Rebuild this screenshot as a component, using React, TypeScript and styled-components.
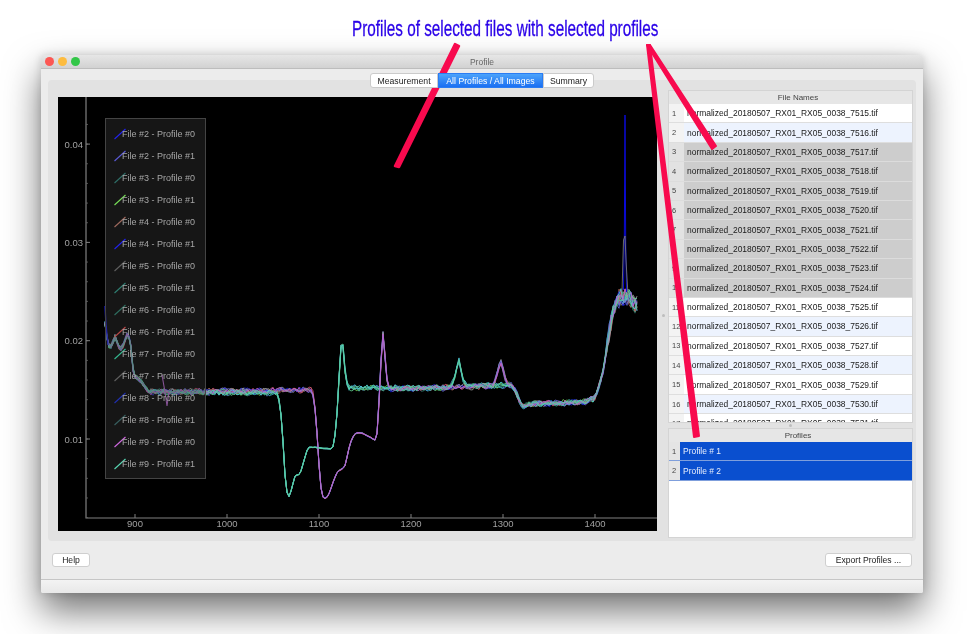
import React from 'react';
import styled, { createGlobalStyle } from 'styled-components';

const GlobalStyle = createGlobalStyle`
  html, body {
    margin: 0;
    padding: 0;
    background: #fff;
    font-family: "Liberation Sans", Arial, sans-serif;
  }
`;

const Page = styled.div`
  position: relative;
  width: 970px;
  height: 634px;
  overflow: hidden;
  background: #fff;
  filter: blur(0.4px);
`;

const Caption = styled.div`
  height: 55px;
  box-sizing: border-box;
  padding: 16px 0 0 352px;
  font-size: 22px;
  line-height: 26px;
  color: #2a00e8;
  white-space: nowrap;
  -webkit-text-stroke: 0.3px #2a00e8;
  transform: scaleX(0.694);
  transform-origin: 352px 0;
`;

const Window = styled.div`
  display: flex;
  flex-direction: column;
  box-sizing: border-box;
  width: 882px;
  height: 538px;
  margin-left: 41px;
  background: #ececec;
  border-radius: 4px 4px 2px 2px;
  box-shadow: 0 18px 36px rgba(0, 0, 0, 0.55), 0 0 8px rgba(0, 0, 0, 0.15);
`;

const TitleBar = styled.div`
  display: grid;
  grid-template-columns: 1fr auto 1fr;
  align-items: center;
  box-sizing: border-box;
  height: 14px;
  flex: none;
  padding: 0 4px;
  background: linear-gradient(#e6e6e6, #d2d2d2);
  border-bottom: 1px solid #bdbdbd;
  border-radius: 4px 4px 0 0;
`;

const Lights = styled.div`
  display: flex;
  gap: 4px;
`;

const Light = styled.span<{ $color: string }>`
  width: 9px;
  height: 9px;
  border-radius: 50%;
  background: ${(p) => p.$color};
`;

const WindowTitle = styled.div`
  font-size: 8.5px;
  color: #666;
`;

const Tabs = styled.div`
  position: relative;
  z-index: 1;
  display: flex;
  justify-content: center;
  flex: none;
  margin-top: 4px;
  height: 15px;
`;

const Tab = styled.div<{ $w: number; $active?: boolean }>`
  width: ${(p) => p.$w}px;
  box-sizing: border-box;
  display: flex;
  align-items: center;
  justify-content: center;
  font-size: 8.7px;
  color: ${(p) => (p.$active ? '#fff' : '#222')};
  background: ${(p) => (p.$active ? 'linear-gradient(#4ba3fb, #1b6ff2)' : '#fff')};
  border: 1px solid ${(p) => (p.$active ? '#2a7cf3' : '#cbcbcb')};
  &:first-child {
    border-radius: 3px 0 0 3px;
  }
  &:last-child {
    border-radius: 0 3px 3px 0;
  }
`;

const Pane = styled.div`
  display: flex;
  flex: none;
  align-items: flex-start;
  box-sizing: border-box;
  width: 868px;
  height: 461px;
  margin: -8px 0 0 7px;
  padding-left: 10px;
  background: #e2e2e2;
  border-radius: 4px;
`;

const Plot = styled.div`
  position: relative;
  flex: none;
  width: 599px;
  height: 434px;
  margin-top: 17px;
  background: #000;
`;

const PlotSvg = styled.svg`
  display: block;
`;

const Legend = styled.div`
  position: absolute;
  left: 47px;
  top: 21px;
  box-sizing: border-box;
  width: 101px;
  height: 361px;
  padding-top: 4px;
  background: rgba(60, 60, 60, 0.36);
  border: 1px solid #444;
`;

const LegendRow = styled.div`
  display: flex;
  align-items: center;
  height: 22px;
  padding-left: 8px;
`;

const LegendSample = styled.svg`
  flex: none;
  margin-right: -4px;
`;

const LegendLabel = styled.span`
  font-size: 9px;
  color: #a6a6a6;
  white-space: nowrap;
`;

const Side = styled.div`
  flex: none;
  display: flex;
  flex-direction: column;
  width: 245px;
  margin: 10px 0 0 11px;
`;

const TableBox = styled.div<{ $h: number }>`
  height: ${(p) => p.$h}px;
  box-sizing: border-box;
  overflow: hidden;
  background: #fff;
  border: 1px solid #d4d4d4;
  border-top: 0;
`;

const Head = styled.div`
  display: flex;
  align-items: center;
  justify-content: center;
  box-sizing: border-box;
  height: 14px;
  padding-left: 15px;
  font-size: 8px;
  color: #444;
  background: #e6e6e6;
  border-top: 1px solid #d4d4d4;
`;

const Row = styled.div<{ $h: number; $bg: string; $gap: string }>`
  display: flex;
  height: ${(p) => p.$h}px;
  box-sizing: border-box;
  background: ${(p) => p.$bg};
  border-bottom: 1.4px solid ${(p) => p.$gap};
`;

const RowNum = styled.div<{ $w: number; $bg: string }>`
  flex: none;
  width: ${(p) => p.$w}px;
  box-sizing: border-box;
  padding-left: 3px;
  display: flex;
  align-items: center;
  font-size: 7.5px;
  color: #444;
  background: ${(p) => p.$bg};
`;

const RowText = styled.div<{ $color?: string; $pad?: number }>`
  padding-left: ${(p) => p.$pad ?? 3}px;
  display: flex;
  align-items: center;
  font-size: 8.45px;
  white-space: nowrap;
  color: ${(p) => p.$color || '#1a1a1a'};
`;

const Splitter = styled.div`
  height: 5px;
  display: flex;
  align-items: center;
  justify-content: center;
`;

const Grip = styled.span`
  width: 3px;
  height: 3px;
  border-radius: 50%;
  background: #bdbdbd;
`;

const VGrip = styled.div`
  position: absolute;
  left: 604px;
  top: 217px;
  width: 3px;
  height: 3px;
  border-radius: 50%;
  background: #bdbdbd;
`;

const Footer = styled.div`
  flex: 1;
  display: flex;
  justify-content: space-between;
  align-items: center;
  padding: 0 11px;
`;

const PushButton = styled.div<{ $w: number }>`
  width: ${(p) => p.$w}px;
  height: 14px;
  display: flex;
  align-items: center;
  justify-content: center;
  font-size: 8.6px;
  color: #222;
  background: #fff;
  border: 1px solid #cfcfcf;
  border-radius: 3px;
  box-sizing: border-box;
`;

const StatusBar = styled.div`
  flex: none;
  height: 14px;
  box-sizing: border-box;
  background: linear-gradient(#f3f3f3, #e8e8e8);
  border-top: 1px solid #c6c6c6;
  border-radius: 0 0 2px 2px;
`;

const Overlay = styled.svg`
  position: absolute;
  left: 0;
  top: 0;
  pointer-events: none;
`;

type Pt = [number, number];

const PRE: Pt[] = [
  [105, 323], [107, 340], [110, 350], [113, 342], [115, 334], [118, 346], [120, 350],
  [124, 345], [127, 333], [131, 342], [133, 375], [140, 380], [147, 390], [152, 392],
];

const TAIL: Pt[] = [
  [512, 385], [516, 392], [522, 407], [530, 404], [585, 402], [595, 398],
  [603, 373], [610, 327], [615, 302], [622, 296], [630, 298], [634, 304], [637, 303],
];

// dip + spikes of the first profile family
const FAM_A: Pt[] = [
  ...PRE, [278, 393], [282, 420], [285, 480], [288, 500], [291, 492], [295, 475], [300, 475],
  [304, 460], [308, 447], [333, 449], [336, 430], [338, 400], [341, 340], [342, 333], [344, 350],
  [345, 377], [348, 388], [450, 388], [455, 378], [459, 355], [462, 378], [466, 386], ...TAIL,
];

// same thing, further right
const FAM_B: Pt[] = [
  ...PRE, [313, 390], [317, 430], [320, 485], [323, 499], [328, 497], [332, 485], [337, 472],
  [345, 467], [350, 443], [355, 433], [362, 433], [377, 441], [380, 383], [383, 319], [386, 377],
  [388, 389], [493, 386], [497, 375], [501, 359], [504, 375], [508, 385], ...TAIL,
];

const interp = (pts: Pt[], x: number) => {
  for (let i = 1; i < pts.length; i++) {
    if (x <= pts[i][0]) {
      const [x0, y0] = pts[i - 1];
      const [x1, y1] = pts[i];
      return y0 + ((y1 - y0) * (x - x0)) / (x1 - x0);
    }
  }
  return pts[pts.length - 1][1];
};

const makeTrace = (pts: Pt[], seed: number) => {
  let s = seed * 7919 + 13;
  const rnd = () => {
    s = (s * 16807) % 2147483647;
    return (s % 1000) / 1000 - 0.5;
  };
  const out: string[] = [];
  for (let x = 105; x <= 637; x += 2) {
    // small average rounds the corners of the dips
    const y = (interp(pts, x - 1.5) + interp(pts, x) * 2 + interp(pts, x + 1.5)) / 4;
    let amp = 5;
    if (y > 412) amp = 1;
    if (x > 606) amp = 14;
    if (x < 150) amp = 4;
    const n = rnd() * amp + Math.sin(x / 3.1 + seed) * amp * 0.2;
    out.push(`${x},${(y + n).toFixed(1)}`);
  }
  return out.join(' ');
};

const TRACES = [
  { c: '#2030e0', f: FAM_B }, { c: '#6a6ae0', f: FAM_A }, { c: '#2f6f68', f: FAM_A },
  { c: '#70c850', f: FAM_A }, { c: '#b06a5a', f: FAM_B }, { c: '#1818d8', f: FAM_B },
  { c: '#909090', f: FAM_B }, { c: '#38b0c8', f: FAM_A }, { c: '#2f8f7a', f: FAM_A },
  { c: '#d05070', f: FAM_B }, { c: '#50d8f0', f: FAM_A }, { c: '#a0a0a0', f: FAM_B },
  { c: '#7070e0', f: FAM_B }, { c: '#60d090', f: FAM_A }, { c: '#c060d0', f: FAM_B },
  { c: '#58c8a8', f: FAM_A },
].map((t, i) => ({ c: t.c, points: makeTrace(t.f, i + 2) }));

const LEGEND: [string, string][] = [
  ['File #2 - Profile #0', '#2222f0'], ['File #2 - Profile #1', '#5a5ad8'],
  ['File #3 - Profile #0', '#2f6f68'], ['File #3 - Profile #1', '#78e058'],
  ['File #4 - Profile #0', '#a06a5e'], ['File #4 - Profile #1', '#2222f0'],
  ['File #5 - Profile #0', '#606060'], ['File #5 - Profile #1', '#2f7f72'],
  ['File #6 - Profile #0', '#2f6f60'], ['File #6 - Profile #1', '#b84848'],
  ['File #7 - Profile #0', '#34b890'], ['File #7 - Profile #1', '#606060'],
  ['File #8 - Profile #0', '#2030b0'], ['File #8 - Profile #1', '#386060'],
  ['File #9 - Profile #0', '#d068e0'], ['File #9 - Profile #1', '#58d8b4'],
];

const XT = [900, 1000, 1100, 1200, 1300, 1400];
const YT = [0.04, 0.03, 0.02, 0.01];
const xPos = (v: number) => 135 + ((v - 900) * 92) / 100;
const yPos = (v: number) => 439 - ((v - 0.01) * 98.3) / 0.01;

const Chart = () => {
  const minorY: number[] = [];
  for (let v = 0.002; v <= 0.044; v += 0.002) minorY.push(v);
  return (
    <PlotSvg width={599} height={434} viewBox="58 97 599 434">
      {TRACES.map((t, i) => (
        <polyline key={i} points={t.points} fill="none" stroke={t.c} strokeWidth={0.8} />
      ))}
      <polyline points="105,306 106,325 108,345" fill="none" stroke="#1818d8" strokeWidth={1.4} />
      <polyline points="162,375 165,392 167,406 169,392" fill="none" stroke="#b060c8" strokeWidth={1.1} />
      <polyline points="623.5,290 624.3,240 625,115 625.7,240 626.5,292" fill="none" stroke="#0a0ad8" strokeWidth={1} />
      <polyline points="622,292 623.5,240 625,236 626,260 628,295" fill="none" stroke="#777" strokeWidth={0.9} />
      <path d="M86 97V518H657" fill="none" stroke="#808080" strokeWidth={1.2} />
      {minorY.map((v) => (
        <line key={v} x1={86} x2={88} y1={yPos(v)} y2={yPos(v)} stroke="#666" strokeWidth={0.8} />
      ))}
      {XT.map((v) => (
        <g key={v}>
          <line x1={xPos(v)} x2={xPos(v)} y1={518} y2={514} stroke="#808080" />
          <text x={xPos(v)} y={527} fontSize={9.5} fill="#a0a0a0" textAnchor="middle">
            {v}
          </text>
        </g>
      ))}
      {YT.map((v) => (
        <g key={v}>
          <line x1={86} x2={90} y1={yPos(v)} y2={yPos(v)} stroke="#808080" />
          <text x={83} y={yPos(v) + 3.5} fontSize={9.5} fill="#a0a0a0" textAnchor="end">
            {v.toFixed(2)}
          </text>
        </g>
      ))}
    </PlotSvg>
  );
};

const files = Array.from({ length: 17 }, (_, i) => ({
  n: i + 1,
  name: `normalized_20180507_RX01_RX05_0038_${7515 + i}.tif`,
  selected: i >= 2 && i <= 9,
}));

export default function App() {
  return (
    <>
      <GlobalStyle />
      <Page>
        <Caption>Profiles of selected files with selected profiles</Caption>
        <Window>
          <TitleBar>
            <Lights>
              <Light $color="#fc5753" />
              <Light $color="#fdbc40" />
              <Light $color="#33c748" />
            </Lights>
            <WindowTitle>Profile</WindowTitle>
            <span />
          </TitleBar>
          <Tabs>
            <Tab $w={68}>Measurement</Tab>
            <Tab $w={105} $active>
              All Profiles / All Images
            </Tab>
            <Tab $w={51}>Summary</Tab>
          </Tabs>
          <Pane>
            <Plot>
              <Chart />
              <Legend>
                {LEGEND.map(([label, color]) => (
                  <LegendRow key={label}>
                    <LegendSample width={12} height={12} viewBox="0 0 12 12">
                      <line x1={0.5} y1={11} x2={11.5} y2={1} stroke={color} strokeWidth={1.1} />
                    </LegendSample>
                    <LegendLabel>{label}</LegendLabel>
                  </LegendRow>
                ))}
              </Legend>
              <VGrip />
            </Plot>
            <Side>
              <TableBox $h={333}>
                <Head>File Names</Head>
                {files.map((f) => (
                  <Row
                    key={f.n}
                    $h={19.4}
                    $bg={f.selected ? '#cdcdcd' : f.n % 2 === 0 ? '#edf3fe' : '#fff'}
                    $gap={f.selected ? '#dcdcdc' : '#dedede'}
                  >
                    <RowNum $w={15} $bg={f.selected ? '#e2e2e2' : '#f3f3f3'}>
                      {f.n}
                    </RowNum>
                    <RowText>{f.name}</RowText>
                  </Row>
                ))}
              </TableBox>
              <Splitter>
                <Grip />
              </Splitter>
              <TableBox $h={110}>
                <Head>Profiles</Head>
                {[1, 2].map((n) => (
                  <Row key={n} $h={19.4} $bg="#0a4fcf" $gap="#7f9fdc">
                    <RowNum $w={11} $bg="#e4e4e4">
                      {n}
                    </RowNum>
                    <RowText $color="#e8eefc" $pad={3}>
                      Profile # {n}
                    </RowText>
                  </Row>
                ))}
              </TableBox>
            </Side>
          </Pane>
          <Footer>
            <PushButton $w={38}>Help</PushButton>
            <PushButton $w={87}>Export Profiles ...</PushButton>
          </Footer>
          <StatusBar />
        </Window>
        <Overlay width={970} height={634} viewBox="0 0 970 634">
          <g fill="#f80a4e" stroke="#f80a4e" strokeLinejoin="round" strokeLinecap="round">
            <polygon points="455,44 459,46 399,167 395,166" strokeWidth={2.5} />
            <polygon points="647,45 650,45 716,146 712,149" strokeWidth={2} />
            <polygon points="647,45 650,45 699,436 694,437" strokeWidth={2} />
          </g>
        </Overlay>
      </Page>
    </>
  );
}
